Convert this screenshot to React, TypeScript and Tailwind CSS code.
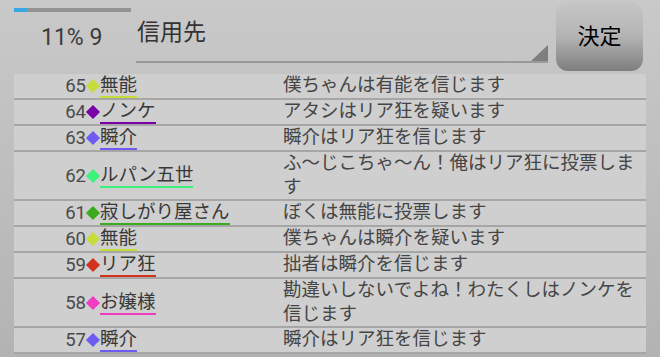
const font = { fontFamily: 'Roboto, "Noto Sans CJK JP", sans-serif' };

const rows = [
  { no: 65, name: "無能", color: "#c6dc3a", msg: "僕ちゃんは有能を信じます" },
  { no: 64, name: "ノンケ", color: "#7800a8", msg: "アタシはリア狂を疑います" },
  { no: 63, name: "瞬介", color: "#6e5cf2", msg: "瞬介はリア狂を信じます" },
  { no: 62, name: "ルパン五世", color: "#3cf27a", msg: "ふ～じこちゃ～ん！俺はリア狂に投票します" },
  { no: 61, name: "寂しがり屋さん", color: "#3caa1e", msg: "ぼくは無能に投票します" },
  { no: 60, name: "無能", color: "#c6dc3a", msg: "僕ちゃんは瞬介を疑います" },
  { no: 59, name: "リア狂", color: "#d2321e", msg: "拙者は瞬介を信じます" },
  { no: 58, name: "お嬢様", color: "#f03cc0", msg: "勘違いしないでよね！わたくしはノンケを信じます" },
  { no: 57, name: "瞬介", color: "#6e5cf2", msg: "瞬介はリア狂を信じます" },
];

function Header() {
  return (
    <div className="flex h-[74px]">
      <div className="w-[136px] flex flex-col">
        <div className="ml-[14px] mt-[8px] w-[117px] h-[4px] bg-[#939393] flex">
          <div className="w-[13px] h-full bg-[#37a9e2]" />
        </div>
        <div className="ml-[41px] mt-[12px] text-[23px] leading-[28px] text-[#3c3c3c]">11% 9</div>
      </div>
      <div className="w-[412px] relative border-b-2 border-[#9a9a9a] h-[63px]">
        <div className="pl-[1px] pt-[18px] text-[23px] leading-[30px] text-[#333]">信用先</div>
        <svg className="absolute right-0 bottom-0" width="17" height="16" viewBox="0 0 17 16">
          <polygon points="17,0 17,16 0,16" fill="#7e7e7e" />
        </svg>
      </div>
      <button className="ml-[8px] mt-[2px] w-[87px] h-[69px] rounded-[12px] bg-gradient-to-b from-[#c6c6c6] via-[#b4b4b4] to-[#7e7e7e] text-[22px] text-black flex items-center justify-center">
        決定
      </button>
    </div>
  );
}

function Row({ r }: { r: (typeof rows)[number] }) {
  return (
    <div className="flex items-center bg-[#cfcfcf] border-b-2 border-[#a6a6a6] min-h-[26px] leading-[22px]">
      <div className="w-[72px] text-right text-[#4a4a4a]">{r.no}</div>
      <div className="w-[14px] h-[22px] flex items-center justify-center">
        <span className="block w-[10px] h-[10px] rotate-45" style={{ backgroundColor: r.color }} />
      </div>
      <div className="w-[183px] flex">
        <span className="block border-b-2 text-[#383838]" style={{ borderColor: r.color }}>
          {r.name}
        </span>
      </div>
      <div className="flex-1 pr-[4px] leading-[23.5px] text-[#454545]">{r.msg}</div>
    </div>
  );
}

export default function App() {
  return (
    <div className="w-[660px] h-[357px] overflow-hidden bg-gradient-to-b from-[#c9c9c9] to-[#b3b3b3]" style={font}>
      <Header />
      <div className="mx-[14px] text-[18.5px]">
        {rows.map((r) => (
          <Row key={r.no} r={r} />
        ))}
      </div>
    </div>
  );
}
